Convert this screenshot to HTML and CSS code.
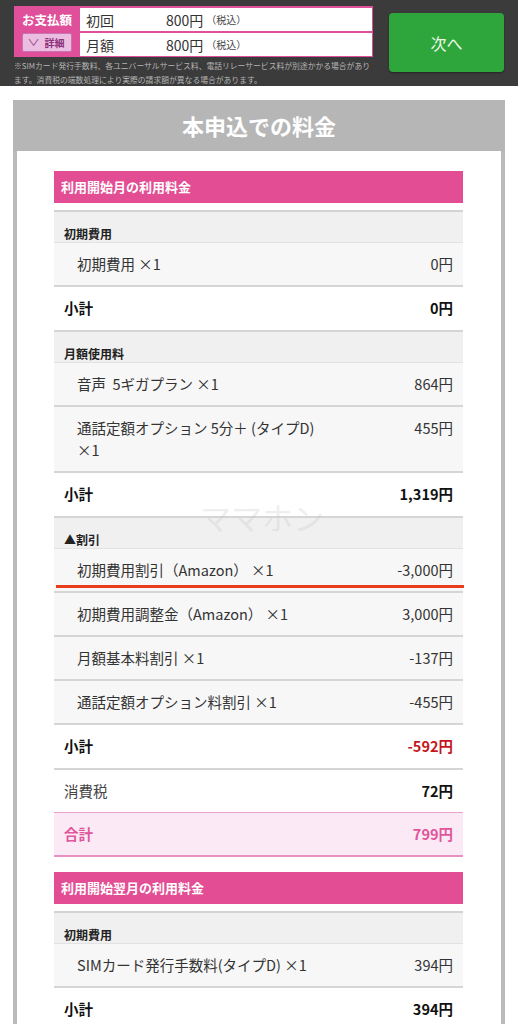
FILE: index.html
```html
<!DOCTYPE html>
<html lang="ja">
<head>
<meta charset="utf-8">
<title>本申込での料金</title>
<link rel="stylesheet" href="styles.css">
</head>
<body>
<header class="topbar">
  <div class="topleft">
    <div class="paybox">
      <div class="paylabel">
        <div class="paytitle">お支払額</div>
        <div class="detailbtn"><span class="chev">∨</span>詳細</div>
      </div>
      <div class="paycells">
        <div class="paycell"><span class="pk">初回</span><span class="pa">800円</span><span class="pt">（税込）</span></div>
        <div class="paycell"><span class="pk">月額</span><span class="pa">800円</span><span class="pt">（税込）</span></div>
      </div>
    </div>
    <p class="notes">※SIMカード発行手数料、各ユニバーサルサービス料、電話リレーサービス料が別途かかる場合があります。消費税の端数処理により実際の請求額が異なる場合があります。</p>
  </div>
  <div class="nextbtn">次へ</div>
</header>

<main class="card">
  <div class="card-head">本申込での料金</div>
  <div class="card-body">
    <section class="sec">
      <h2 class="sec-head">利用開始月の利用料金</h2>
      <div class="tbl">
        <div class="cat">初期費用</div>
        <div class="item"><span class="lbl">初期費用 ×1</span><span class="val">0円</span></div>
        <div class="sub"><span>小計</span><span>0円</span></div>

        <div class="cat">月額使用料</div>
        <div class="item"><span class="lbl">音声&nbsp; 5ギガプラン ×1</span><span class="val">864円</span></div>
        <div class="item"><span class="lbl">通話定額オプション 5分＋ (タイプD) ×1</span><span class="val">455円</span></div>
        <div class="sub"><span>小計</span><span>1,319円</span></div>

        <div class="cat">▲割引</div>
        <div class="item marked"><span class="lbl">初期費用割引（Amazon） ×1</span><span class="val">-3,000円</span><span class="redline"></span></div>
        <div class="item"><span class="lbl">初期費用調整金（Amazon） ×1</span><span class="val">3,000円</span></div>
        <div class="item"><span class="lbl">月額基本料割引 ×1</span><span class="val">-137円</span></div>
        <div class="item"><span class="lbl">通話定額オプション料割引 ×1</span><span class="val">-455円</span></div>
        <div class="sub"><span>小計</span><span class="neg">-592円</span></div>

        <div class="taxrow"><span>消費税</span><span class="b">72円</span></div>
        <div class="total"><span>合計</span><span>799円</span></div>
      </div>
    </section>

    <section class="sec sec2">
      <h2 class="sec-head">利用開始翌月の利用料金</h2>
      <div class="tbl">
        <div class="cat">初期費用</div>
        <div class="item"><span class="lbl">SIMカード発行手数料(タイプD) ×1</span><span class="val">394円</span></div>
        <div class="sub"><span>小計</span><span>394円</span></div>
      </div>
    </section>

    <div class="watermark">ママホン</div>
  </div>
</main>
</body>
</html>
```

FILE: styles.css
```css
* { box-sizing: border-box; }
html, body { margin: 0; padding: 0; }
body {
  background: #ffffff;
  font-family: "Noto Sans CJK JP", "Noto Sans", sans-serif;
  color: #333;
}

/* top bar */
.topbar {
  display: flex;
  align-items: flex-start;
  height: 86px;
  background: #3b3b3b;
  padding: 6px 14px 0 14px;
}
.topleft { width: 359px; }
.paybox {
  display: flex;
  background: #e0509a;
  padding: 2px 1px 1px 0;
}
.paylabel {
  width: 66px;
  display: flex;
  flex-direction: column;
  align-items: center;
}
.paytitle {
  color: #fff;
  font-weight: 700;
  font-size: 12.5px;
  line-height: 23px;
  height: 25px;
}
.detailbtn {
  width: 50px;
  height: 19px;
  background: #ebbde0;
  border: 1px solid #c873b3;
  border-radius: 2px;
  color: #8a2f7a;
  font-size: 10px;
  font-weight: 700;
  line-height: 17px;
  display: flex;
  align-items: center;
  justify-content: center;
  gap: 6px;
}
.chev { font-size: 9px; font-weight: 400; color: #8e3d86; transform: scaleX(1.4); }
.paycells {
  flex: 1;
  display: flex;
  flex-direction: column;
  gap: 2px;
}
.paycell {
  height: 23px;
  background: #fff;
  display: flex;
  align-items: center;
  padding-left: 6px;
  font-size: 14px;
  color: #333;
  white-space: nowrap;
}
.pk { width: 80px; }
.pa { margin-right: 3px; }
.pt { font-size: 10px; color: #444; }
.notes {
  margin: 2px 0 0 0;
  font-size: 7.8px;
  line-height: 14px;
  color: #b5b5b5;
  width: 362px;
}
.nextbtn {
  margin-left: 16px;
  margin-top: 7px;
  width: 115px;
  height: 59px;
  background: #2fa63b;
  border-radius: 4px;
  color: #eef9ec;
  font-size: 16px;
  display: flex;
  align-items: center;
  justify-content: center;
  box-shadow: 0 1px 2px rgba(0,0,0,0.4);
}

/* card */
.card {
  display: block;
  margin: 14px 0 0 13px;
  width: 492px;
  border-left: 4px solid #bababa;
  border-right: 4px solid #bababa;
}
.card-head {
  height: 51px;
  margin: 0 -4px;
  background: #b6b6b6;
  color: #fff;
  font-size: 22px;
  font-weight: 700;
  text-align: center;
  line-height: 51px;
}
.card-body {
  position: relative;
  padding: 20px 38px 0 37px;
}
.sec-head {
  margin: 0;
  height: 32px;
  background: #e24d93;
  color: #fff;
  font-size: 13px;
  font-weight: 700;
  line-height: 32px;
  padding-left: 7px;
}
.sec2 { margin-top: 15px; }
.tbl {
  margin-top: 7px;
  border-top: 2px solid #d3d3d3;
}
.cat {
  background: #f0f0f0;
  font-size: 12px;
  font-weight: 700;
  color: #222;
  line-height: 15px;
  padding: 14px 10px 1px;
  border-bottom: 1px solid #e2e2e2;
}
.item, .sub, .taxrow, .total {
  position: relative;
  display: flex;
  justify-content: space-between;
  align-items: flex-start;
  font-size: 14.5px;
  line-height: 22px;
}
.item {
  background: #f7f7f7;
  padding: 10px 10px 10px 23px;
  border-bottom: 2px solid #d5d5d5;
}
.lbl { width: 256px; }
.val { text-align: right; }
.sub {
  background: #fff;
  padding: 10px 10px 11px;
  border-bottom: 2px solid #d5d5d5;
  font-weight: 700;
  color: #111;
}
.neg { color: #c5161d; }
.taxrow {
  background: #fff;
  padding: 10px 10px 10px;
  border-bottom: 1px solid #eba3cd;
  color: #444;
}
.taxrow .b { font-weight: 700; color: #111; }
.total {
  background: #fbe9f5;
  padding: 10px 10px 10px;
  border-bottom: 2px solid #e990c2;
  color: #e0559b;
  font-weight: 700;
}
.redline {
  position: absolute;
  left: 2px;
  right: -1px;
  bottom: 3px;
  height: 3px;
  background: #e83c1c;
}
.watermark {
  position: absolute;
  left: 183px;
  top: 350px;
  font-size: 31px;
  line-height: 32px;
  color: rgba(190, 190, 190, 0.25);
  pointer-events: none;
}
```
